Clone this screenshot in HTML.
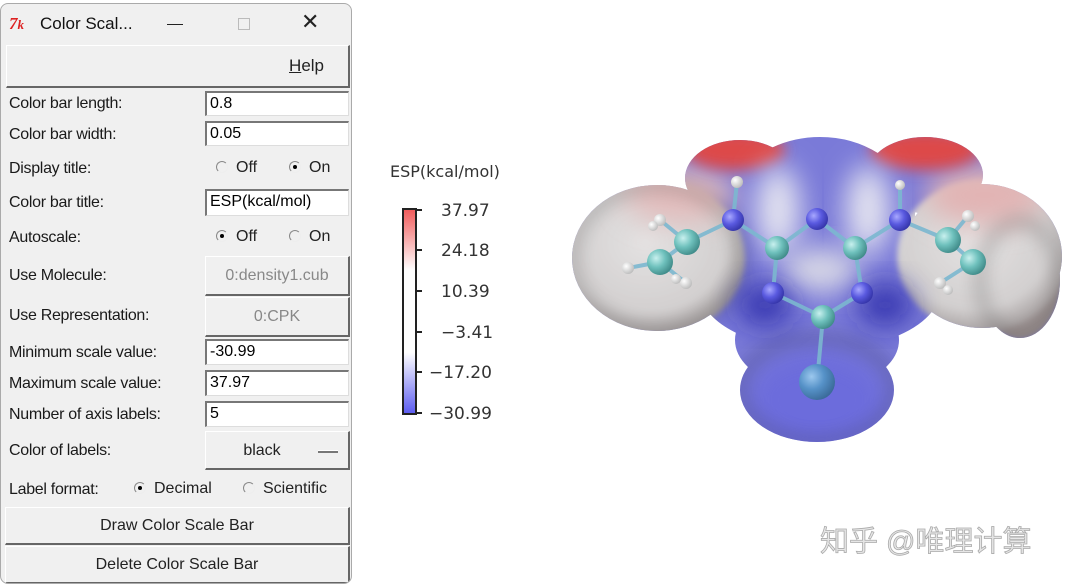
<!DOCTYPE html>
<html><head><meta charset="utf-8"><style>
*{margin:0;padding:0;box-sizing:border-box}
body{width:1080px;height:585px;background:#fff;position:relative;overflow:hidden;font-family:"Liberation Sans",Arial,sans-serif;}
.win{position:absolute;left:0;top:3px;width:352px;height:581px;background:#f0f0f0;border:1px solid #aaa;border-radius:8px;overflow:hidden}
.abs{position:absolute}
.lbl{position:absolute;left:8px;font-size:16px;color:#1a1a1a;letter-spacing:-0.3px}
.ent{position:absolute;left:204px;width:144px;background:#fff;border-top:2px solid #777;border-left:2px solid #777;border-bottom:1px solid #ddd;border-right:1px solid #ddd;font-size:16px;padding-left:3px;line-height:21px;color:#000}
.btn{position:absolute;background:#f0f0f0;border-right:2px solid #666;border-bottom:2px solid #666;border-top:1px solid #fff;border-left:1px solid #fff;font-size:16px;color:#222;text-align:center}
.rad{position:absolute;font-size:16px;color:#222}
.rc{display:inline-block;width:12px;height:12px;border-radius:50%;border:1px solid #999;border-color:#888 #eee #eee #888;vertical-align:-1px;position:relative;margin-right:8px;background:#f0f0f0}
.rc.on:after{content:"";position:absolute;left:3px;top:3px;width:4px;height:4px;border-radius:50%;background:#000}
</style></head><body>
<div class="win">
  <div class="abs" style="left:8px;top:10px;font-size:17px;color:#d22;font-weight:bold;font-style:italic;font-family:'Liberation Serif',serif">7<span style="font-size:13px">k</span></div>
  <div class="abs" style="left:39px;top:10px;font-size:17px;color:#111">Color Scal...</div>
  <div class="abs" style="left:166px;top:20px;width:16px;height:1px;background:#222"></div>
  <div class="abs" style="left:237px;top:14px;width:12px;height:12px;border:1px solid #bbb"></div>
  <div class="abs" style="left:300px;top:5px;font-size:22px;color:#222">✕</div>
  <div class="btn" style="left:5px;top:41px;width:344px;height:43px;line-height:40px;text-align:right;padding-right:24px;font-size:17px"><u>H</u>elp</div>
  <div class="lbl" style="top:91px">Color bar length:</div><div class="ent" style="top:87px;height:25px">0.8</div>
  <div class="lbl" style="top:122px">Color bar width:</div><div class="ent" style="top:117px;height:25px">0.05</div>
  <div class="lbl" style="top:156px">Display title:</div>
  <div class="rad" style="left:215px;top:155px"><span class="rc"></span>Off</div>
  <div class="rad" style="left:288px;top:155px"><span class="rc on"></span>On</div>
  <div class="lbl" style="top:190px">Color bar title:</div><div class="ent" style="top:185px;height:27px">ESP(kcal/mol)</div>
  <div class="lbl" style="top:225px">Autoscale:</div>
  <div class="rad" style="left:215px;top:224px"><span class="rc on"></span>Off</div>
  <div class="rad" style="left:288px;top:224px"><span class="rc"></span>On</div>
  <div class="lbl" style="top:263px">Use Molecule:</div>
  <div class="btn" style="left:204px;top:252px;width:145px;height:40px;line-height:38px;color:#888">0:density1.cub</div>
  <div class="lbl" style="top:303px">Use Representation:</div>
  <div class="btn" style="left:204px;top:293px;width:145px;height:40px;line-height:38px;color:#888">0:CPK</div>
  <div class="lbl" style="top:340px">Minimum scale value:</div><div class="ent" style="top:335px;height:26px">-30.99</div>
  <div class="lbl" style="top:371px">Maximum scale value:</div><div class="ent" style="top:366px;height:26px">37.97</div>
  <div class="lbl" style="top:402px">Number of axis labels:</div><div class="ent" style="top:397px;height:26px">5</div>
  <div class="lbl" style="top:438px">Color of labels:</div>
  <div class="btn" style="left:204px;top:427px;width:145px;height:39px;line-height:37px;padding-right:30px">black<span class="abs" style="right:10px;top:18px;width:20px;height:3px;border-top:1px solid #fff;border-bottom:2px solid #777;background:#ddd"></span></div>
  <div class="lbl" style="top:477px">Label format:</div>
  <div class="rad" style="left:133px;top:476px"><span class="rc on"></span>Decimal</div>
  <div class="rad" style="left:242px;top:476px"><span class="rc"></span>Scientific</div>
  <div class="btn" style="left:4px;top:503px;width:345px;height:38px;line-height:36px">Draw Color Scale Bar</div>
  <div class="btn" style="left:4px;top:542px;width:345px;height:38px;line-height:36px">Delete Color Scale Bar</div>
</div>

<svg class="abs" style="left:380px;top:150px" width="180" height="280">
<defs><linearGradient id="cb" x1="0" y1="0" x2="0" y2="1">
<stop offset="0" stop-color="#f05a5a"/><stop offset="0.3" stop-color="#fff"/><stop offset="0.7" stop-color="#fff"/><stop offset="1" stop-color="#5a5af0"/></linearGradient></defs>
<text x="10" y="27" font-family="DejaVu Sans,sans-serif" font-size="16" fill="#333">ESP(kcal/mol)</text>
<rect x="23" y="59" width="13" height="205" fill="url(#cb)" stroke="#222" stroke-width="2"/>
<g stroke="#222" stroke-width="2"><line x1="36" y1="60" x2="42" y2="60"/><line x1="36" y1="100" x2="42" y2="100"/><line x1="36" y1="141" x2="42" y2="141"/><line x1="36" y1="182" x2="42" y2="182"/><line x1="36" y1="222" x2="42" y2="222"/><line x1="36" y1="263" x2="42" y2="263"/></g>
<g font-family="DejaVu Sans,sans-serif" font-size="17" fill="#333">
<text x="61" y="66">37.97</text><text x="61" y="106">24.18</text><text x="61" y="147">10.39</text><text x="61" y="188">−3.41</text><text x="49" y="228">−17.20</text><text x="49" y="269">−30.99</text></g>
</svg>

<svg class="abs" style="left:0;top:0" width="1080" height="585">
<defs>
<filter id="bl" x="-50%" y="-50%" width="200%" height="200%"><feGaussianBlur stdDeviation="14"/></filter>
<filter id="bl8" x="-50%" y="-50%" width="200%" height="200%"><feGaussianBlur stdDeviation="7"/></filter>
<filter id="bl3" x="-50%" y="-50%" width="200%" height="200%"><feGaussianBlur stdDeviation="3"/></filter>
<filter id="edge" x="-10%" y="-10%" width="120%" height="120%"><feGaussianBlur stdDeviation="8"/></filter>
<clipPath id="sil">
<ellipse cx="657" cy="258" rx="85" ry="73"/>
<ellipse cx="982" cy="256" rx="80" ry="72"/>
<ellipse cx="1020" cy="280" rx="40" ry="58"/>
<ellipse cx="740" cy="178" rx="55" ry="38"/>
<ellipse cx="925" cy="175" rx="58" ry="38"/>
<ellipse cx="820" cy="215" rx="95" ry="78"/>
<ellipse cx="820" cy="290" rx="120" ry="60"/>
<ellipse cx="817" cy="390" rx="77" ry="52"/>
<ellipse cx="817" cy="340" rx="82" ry="50"/>
</clipPath>
<radialGradient id="at" cx="0.35" cy="0.35" r="0.7"><stop offset="0" stop-color="#c8f0ee"/><stop offset="0.5" stop-color="#6fc1bd"/><stop offset="1" stop-color="#3f8a88"/></radialGradient>
<radialGradient id="an" cx="0.35" cy="0.35" r="0.7"><stop offset="0" stop-color="#a8a8ff"/><stop offset="0.5" stop-color="#5a5ae0"/><stop offset="1" stop-color="#3434a8"/></radialGradient>
<radialGradient id="acl" cx="0.35" cy="0.35" r="0.7"><stop offset="0" stop-color="#9cc8ee"/><stop offset="0.5" stop-color="#5692c8"/><stop offset="1" stop-color="#3a6a98"/></radialGradient>
<radialGradient id="ah" cx="0.35" cy="0.35" r="0.7"><stop offset="0" stop-color="#fff"/><stop offset="1" stop-color="#bbb"/></radialGradient>
<radialGradient id="gl" cx="0.45" cy="0.4" r="0.6"><stop offset="0" stop-color="#e4e2e2"/><stop offset="0.75" stop-color="#d2cfcf"/><stop offset="1" stop-color="#a8a2a2"/></radialGradient>
</defs>
<g clip-path="url(#sil)">
<rect x="560" y="120" width="520" height="340" fill="#7a7ad8"/>
<ellipse cx="817" cy="400" rx="70" ry="50" fill="#6c6cdc" filter="url(#bl)"/>
<ellipse cx="1020" cy="280" rx="42" ry="60" fill="#9a9090" filter="url(#bl3)"/>
<ellipse cx="655" cy="258" rx="90" ry="78" fill="url(#gl)" filter="url(#bl3)"/>
<ellipse cx="982" cy="256" rx="85" ry="76" fill="url(#gl)" filter="url(#bl3)"/>
<ellipse cx="680" cy="195" rx="55" ry="28" fill="#e2bcbc" filter="url(#bl)"/>
<ellipse cx="985" cy="195" rx="60" ry="30" fill="#e2b4b4" filter="url(#bl)"/>
<ellipse cx="735" cy="150" rx="50" ry="20" fill="#dd4a4a" filter="url(#bl8)"/>
<ellipse cx="925" cy="150" rx="55" ry="20" fill="#dd4a4a" filter="url(#bl8)"/>
<ellipse cx="778" cy="210" rx="22" ry="45" fill="#e4e4f0" filter="url(#bl)"/>
<ellipse cx="868" cy="210" rx="22" ry="45" fill="#e4e4f0" filter="url(#bl)"/>
<ellipse cx="820" cy="270" rx="40" ry="22" fill="#d8d8e6" filter="url(#bl)"/>
<ellipse cx="765" cy="305" rx="28" ry="22" fill="#1c1ca0" filter="url(#bl)" opacity="0.7"/>
<ellipse cx="885" cy="305" rx="28" ry="22" fill="#1c1ca0" filter="url(#bl)" opacity="0.7"/>
<g fill="none" stroke="#000" stroke-width="14" opacity="0.15" filter="url(#edge)">
<ellipse cx="657" cy="258" rx="85" ry="73"/><ellipse cx="1020" cy="280" rx="40" ry="58"/><ellipse cx="817" cy="390" rx="77" ry="52"/></g>
</g>
<g stroke="#7cb8d0" stroke-width="4" opacity="0.9">
<line x1="660" y1="262" x2="687" y2="242"/><line x1="687" y1="242" x2="733" y2="220"/><line x1="733" y1="220" x2="777" y2="248"/><line x1="737" y1="182" x2="733" y2="220"/>
<line x1="777" y1="248" x2="817" y2="219"/><line x1="817" y1="219" x2="855" y2="248"/><line x1="855" y1="248" x2="900" y2="220"/><line x1="900" y1="185" x2="900" y2="220"/>
<line x1="900" y1="220" x2="948" y2="240"/><line x1="948" y1="240" x2="973" y2="262"/>
<line x1="777" y1="248" x2="773" y2="293"/><line x1="855" y1="248" x2="862" y2="293"/><line x1="773" y1="293" x2="823" y2="317"/><line x1="862" y1="293" x2="823" y2="317"/><line x1="823" y1="317" x2="817" y2="382"/>
<line x1="660" y1="262" x2="628" y2="268"/><line x1="687" y1="242" x2="660" y2="220"/><line x1="660" y1="262" x2="686" y2="283"/><line x1="948" y1="240" x2="968" y2="216"/><line x1="973" y1="262" x2="940" y2="283"/></g>
<g fill="url(#ah)">
<circle cx="737" cy="182" r="6"/><circle cx="900" cy="185" r="5"/><circle cx="628" cy="268" r="6"/><circle cx="660" cy="220" r="6"/><circle cx="653" cy="226" r="5"/><circle cx="686" cy="283" r="6"/><circle cx="676" cy="279" r="5"/>
<circle cx="968" cy="216" r="6"/><circle cx="975" cy="226" r="5"/><circle cx="940" cy="283" r="6"/><circle cx="948" cy="290" r="5"/></g>
<g fill="url(#at)"><circle cx="660" cy="262" r="13"/><circle cx="687" cy="242" r="13"/><circle cx="948" cy="240" r="13"/><circle cx="973" cy="262" r="13"/>
<circle cx="777" cy="248" r="12"/><circle cx="855" cy="248" r="12"/><circle cx="823" cy="317" r="12"/></g>
<g fill="url(#an)"><circle cx="733" cy="220" r="11"/><circle cx="817" cy="219" r="11"/><circle cx="900" cy="220" r="11"/><circle cx="773" cy="293" r="11"/><circle cx="862" cy="293" r="11"/></g>
<circle cx="817" cy="382" r="18" fill="url(#acl)"/>
<text x="820" y="551" font-family="'Liberation Sans','Noto Sans CJK SC',sans-serif" font-size="29" fill="#e6e6e6" stroke="#aaa" stroke-width="0.8">知乎 @唯理计算</text>
</svg>
</body></html>
